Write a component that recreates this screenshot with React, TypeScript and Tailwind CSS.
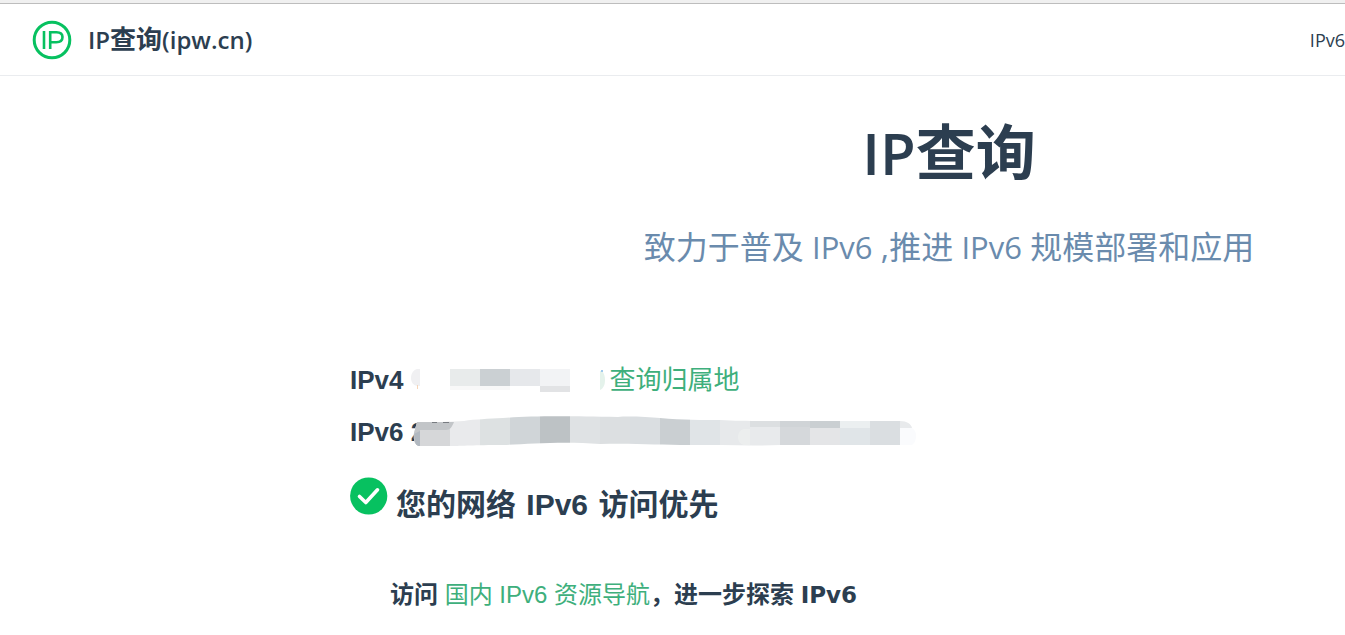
import React from 'react';

const segoe = "font-['Open_Sans','Noto_Sans_CJK_SC',sans-serif]";
const arial = "font-['Liberation_Sans','Noto_Sans_CJK_SC',sans-serif]";

type Tile = [x: number, y: number, w: number, h: number, fill: string];

const v4Tiles: Tile[] = [
  [40, 2, 30, 17, '#e8ebeb'],
  [70, 2, 30, 17, '#cbd0d3'],
  [100, 2, 30, 17, '#e6e8eb'],
  [130, 2, 30, 17, '#f2f3f5'],
  [40, 19, 60, 4, '#f8f8f8'],
  [130, 19, 30, 6, '#e2e3e5'],
];

const v6Tiles: Tile[] = [
  [0, 0, 37, 40, '#d6d7d9'],
  [37, 0, 30, 40, '#e9eaec'],
  [67, 0, 30, 40, '#dde1e2'],
  [97, 0, 30, 40, '#d0d5d8'],
  [127, 0, 30, 40, '#bdc2c5'],
  [157, 0, 30, 40, '#dfe2e4'],
  [187, 0, 30, 40, '#dcdfe1'],
  [217, 0, 30, 40, '#dadee1'],
  [247, 0, 30, 40, '#cacfd2'],
  [277, 0, 30, 40, '#e0e4e7'],
  [307, 0, 30, 40, '#e7e9eb'],
  [337, 0, 30, 40, '#e8eaec'],
  [367, 0, 30, 40, '#d5d8db'],
  [397, 0, 30, 40, '#e4e5e7'],
  [427, 0, 30, 40, '#e0e5e8'],
  [457, 0, 30, 40, '#dadee1'],
  [337, 0, 30, 11, '#dcdfe1'],
  [367, 0, 30, 11, '#d0d4d7'],
  [397, 0, 30, 12, '#cacfd2'],
  [427, 0, 30, 12, '#ebeff0'],
];

function Tiles({ items }: { items: Tile[] }) {
  return (
    <>
      {items.map(([x, y, w, h, fill], i) => (
        <rect key={i} x={x} y={y} width={w} height={h} fill={fill} shapeRendering="crispEdges" />
      ))}
    </>
  );
}

function MaskedV4() {
  return (
    <svg className="h-[26px] w-[196px] shrink-0" viewBox="0 0 196 26" aria-hidden="true">
      <path d="M10 2H7C3 3 1 7 1 11s2 7 6 8h3z" fill="#f0f0f2" />
      <path d="M7 18h1v4H7z" fill="#f6d5b8" />
      <Tiles items={v4Tiles} />
      <path d="M190 4h2c2 2 3 5 3 9s-1 8-5 10z" fill="#e4f2eb" />
      <path d="M191 3h2v2h-2z" fill="#9fc9ed" />
    </svg>
  );
}

function MaskedV6() {
  return (
    <svg className="-ml-3 h-8 w-[504px] shrink-0" viewBox="0 0 504 32" aria-hidden="true">
      <defs>
        <clipPath id="brush">
          <path d="M4 6C20 6 40 6 51 5C62 3 75 3 90 2C115 0 150 0 205 1C215 0 235 1 247 2C270 4 290 4 307 4C325 5 340 5 367 5H487V29H367C340 30 310 29 277 29C245 29 220 27 187 28C150 25 115 28 90 29C60 29 50 30 37 30H7C2 30 0 24 1 17Z" />
        </clipPath>
      </defs>
      <g clipPath="url(#brush)">
        <Tiles items={v6Tiles} />
        <path d="M0 6H41C39 11 37 14 33 14H7v16H0z" fill="#c2c5c8" />
        <path d="M1 18l6-3v15H3z" fill="#b1b8c0" />
        <path d="M337 13h-6c-4 1-6 4-6 8s2 7 6 8h6z" fill="#eceeee" />
      </g>
      <path d="M19 6h5v1h-5zM30 6h6v1h-6z" fill="#777b80" />
      <path d="M487 5c7 0 11 3 12 7h-12z" fill="#e8eaec" />
      <path d="M487 12h12c3 2 4 4 4 8s-1 7-4 9h-12z" fill="#fafbfd" />
    </svg>
  );
}

function Logo() {
  return (
    <svg className="size-10" viewBox="0 0 40 40" fill="none" stroke="#07c160" aria-hidden="true">
      <circle cx="20" cy="20" r="17.8" strokeWidth="3" />
      <path d="M12 11v18" strokeWidth="2.6" />
      <path d="M18.2 29V12.2h6.3c4 0 6 1.7 6 4.8s-2.2 5.2-6.2 5.2h-6" strokeWidth="2.6" />
    </svg>
  );
}

function CheckBadge() {
  return (
    <svg className="mt-0.5 size-[38px] shrink-0" viewBox="0 0 38 38" aria-hidden="true">
      <circle cx="18.7" cy="19" r="18.6" fill="#07c160" />
      <path d="M9.5 19.5l6.3 6L27.5 12.8" fill="none" stroke="#fff" strokeWidth="3.6" strokeLinecap="round" strokeLinejoin="round" />
    </svg>
  );
}

export default function App() {
  return (
    <div className={`min-h-screen overflow-hidden bg-white text-[#2c3e50] ${arial}`}>
      <div className="h-1 border-b border-[#bdbdbd] bg-[#f0f0f0]" />
      <header className={`flex h-18 items-center justify-between border-b border-[#eaecef] pl-8 ${segoe}`}>
        <a href="#home" className="flex items-center gap-4">
          <Logo />
          <span className="text-2xl font-semibold">
            IP<span className="text-[26px] font-bold">查询</span>(ipw.cn)
          </span>
        </a>
        <nav>
          <a href="#ipv6" className="text-lg">IPv6</a>
        </nav>
      </header>

      <main className="flex w-[1898px] flex-col items-center pt-[38px]">
        <section className={`text-center ${segoe}`}>
          <h1 className="text-[58px] leading-[76px] font-semibold">
            IP<span className="text-[60px] font-bold">查询</span>
          </h1>
          <p className="mt-[34px] text-[32px] leading-[44px] text-[#6a8bad]">
            致力于普及 <span className="text-[31px]">IPv6</span> ,推进 <span className="text-[31px]">IPv6</span> 规模部署和应用
          </p>
        </section>

        <section className="mt-[85px] w-[1198px]">
          <div className="flex h-[52px] items-center text-[26px]">
            <strong>IPv4</strong>
            <span className="ml-1.5 flex">
              <MaskedV4 />
            </span>
            <a href="#location" className="ml-1 text-[#3eaf7c]">查询归属地</a>
          </div>
          <div className="flex h-[52px] items-center text-[26px]">
            <strong>IPv6 2</strong>
            <MaskedV6 />
          </div>
          <h2 className="mt-[17px] flex gap-2 text-[30px] leading-[60px] font-bold">
            <CheckBadge />
            <span>您的网络<span className="mx-0.5"> IPv6 </span>访问优先</span>
          </h2>
          <p className="mt-[42px] pl-10 text-2xl leading-9 font-bold">
            访问 <a href="#resources" className="font-normal text-[#3eaf7c]">国内 IPv6 资源导航</a>，进一步探索{' '}
            <span className="font-['DejaVu_Sans',sans-serif] text-[23px]">IPv6</span>
          </p>
        </section>
      </main>
    </div>
  );
}
